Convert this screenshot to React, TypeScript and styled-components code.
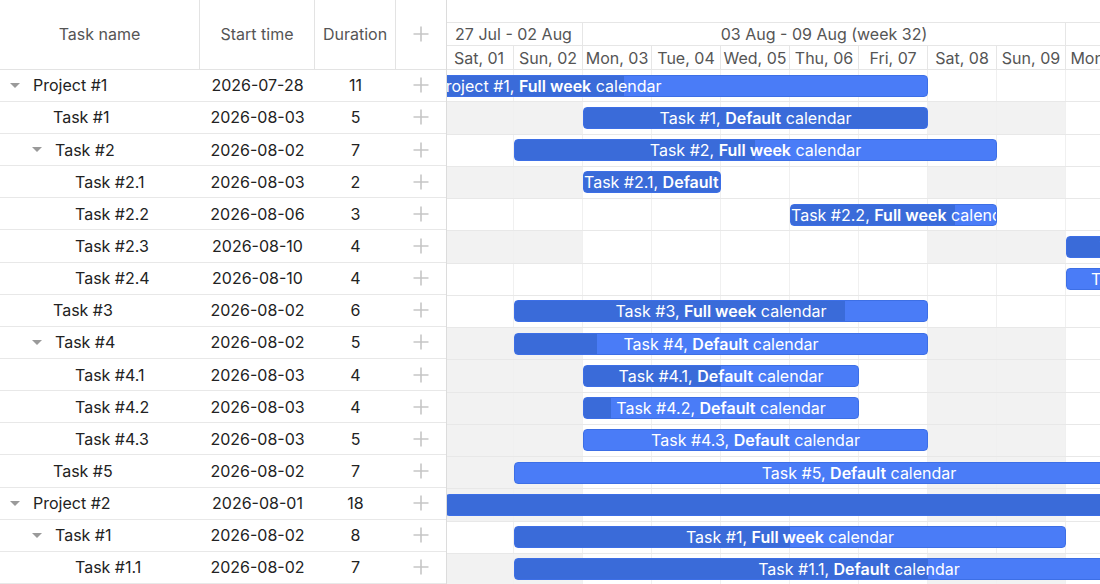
import React from "react";
import styled, { createGlobalStyle } from "styled-components";

const DAY_W = 69;
const ROW_H = 32.27;
const ORIGIN = Date.UTC(2026, 7, 1); // Sat, 01 Aug

type Calendar = "Default" | "Full week";

interface TaskRow {
  name: string;
  level: number;
  parent?: boolean;
  start: string;
  duration: number;
  calendar: Calendar;
  progress: number;
}

const rows: TaskRow[] = [
  { name: "Project #1", level: 0, parent: true, start: "2026-07-28", duration: 11, calendar: "Full week", progress: 0.6 },
  { name: "Task #1", level: 1, start: "2026-08-03", duration: 5, calendar: "Default", progress: 1 },
  { name: "Task #2", level: 1, parent: true, start: "2026-08-02", duration: 7, calendar: "Full week", progress: 0.5 },
  { name: "Task #2.1", level: 2, start: "2026-08-03", duration: 2, calendar: "Default", progress: 1 },
  { name: "Task #2.2", level: 2, start: "2026-08-06", duration: 3, calendar: "Full week", progress: 0.8 },
  { name: "Task #2.3", level: 2, start: "2026-08-10", duration: 4, calendar: "Default", progress: 1 },
  { name: "Task #2.4", level: 2, start: "2026-08-10", duration: 4, calendar: "Full week", progress: 0 },
  { name: "Task #3", level: 1, start: "2026-08-02", duration: 6, calendar: "Full week", progress: 0.8 },
  { name: "Task #4", level: 1, parent: true, start: "2026-08-02", duration: 5, calendar: "Default", progress: 0.2 },
  { name: "Task #4.1", level: 2, start: "2026-08-03", duration: 4, calendar: "Default", progress: 0.5 },
  { name: "Task #4.2", level: 2, start: "2026-08-03", duration: 4, calendar: "Default", progress: 0.1 },
  { name: "Task #4.3", level: 2, start: "2026-08-03", duration: 5, calendar: "Default", progress: 0 },
  { name: "Task #5", level: 1, start: "2026-08-02", duration: 7, calendar: "Default", progress: 0 },
  { name: "Project #2", level: 0, parent: true, start: "2026-08-01", duration: 18, calendar: "Default", progress: 1 },
  { name: "Task #1", level: 1, parent: true, start: "2026-08-02", duration: 8, calendar: "Full week", progress: 0.5 },
  { name: "Task #1.1", level: 2, start: "2026-08-02", duration: 7, calendar: "Default", progress: 0.6 },
];

const days = ["Sat, 01", "Sun, 02", "Mon, 03", "Tue, 04", "Wed, 05", "Thu, 06", "Fri, 07", "Sat, 08", "Sun, 09", "Mon, 10", "Tue, 11"];
// the next week's label sits off to the right, outside the visible area
const weeks = [
  { label: "27 Jul - 02 Aug", span: 2 },
  { label: "03 Aug - 09 Aug (week 32)", span: 7 },
  { label: "", span: 7 },
];

const dayIndex = (iso: string) => {
  const [y, m, d] = iso.split("-").map(Number);
  return Math.round((Date.UTC(y, m - 1, d) - ORIGIN) / 86400000);
};
const isWeekend = (i: number) => {
  const dow = ((i % 7) + 7) % 7; // 0 = Sat, 1 = Sun
  return dow === 0 || dow === 1;
};
const endIndex = (t: TaskRow) => {
  const s = dayIndex(t.start);
  if (t.calendar === "Full week") return s + t.duration;
  let i = s;
  let count = 0;
  while (count < t.duration) {
    if (!isWeekend(i)) count++;
    i++;
  }
  return i;
};

const GlobalStyle = createGlobalStyle`
  html, body {
    margin: 0;
    padding: 0;
    background: #fff;
  }
  body {
    font-family: Inter, "Noto Sans", "Liberation Sans", sans-serif;
    color: #222;
  }
`;

const Page = styled.div`
  display: flex;
  width: 1100px;
  height: 584px;
  overflow: hidden;
  background: #fff;
`;

/* ---------- left grid ---------- */
const Grid = styled.div`
  width: 446px;
  flex: none;
  border-right: 1px solid #dcdcdc;
  display: flex;
  flex-direction: column;
`;
const GridHeader = styled.div`
  display: grid;
  grid-template-columns: 200px 115px 81px 50px;
  height: 70px;
  box-sizing: border-box;
  border-bottom: 1px solid #e3e3e3;
`;
const HeaderCell = styled.div<{ $last?: boolean }>`
  display: flex;
  align-items: center;
  justify-content: center;
  font-size: 16px;
  color: #555;
  border-right: ${(p) => (p.$last ? "none" : "1px solid #e3e3e3")};
`;
const GridRow = styled.div`
  display: grid;
  grid-template-columns: 200px 115px 81px 50px;
  height: ${ROW_H}px;
  box-sizing: border-box;
  border-bottom: 1px solid #e8e8e8;
  font-size: 16px;
  color: #222;
`;
const NameCell = styled.div<{ $level: number }>`
  display: flex;
  align-items: center;
  padding-left: ${(p) => 6 + p.$level * 22}px;
  white-space: nowrap;
`;
const Toggle = styled.span`
  width: 18px;
  margin-right: 9px;
  display: flex;
  justify-content: center;
  &::before {
    content: "";
    border-left: 5px solid transparent;
    border-right: 5px solid transparent;
    border-top: 5px solid #9a9a9a;
  }
`;
const LeafSpacer = styled.span`
  width: 25px;
  flex: none;
`;
const CenterCell = styled.div`
  display: flex;
  align-items: center;
  justify-content: center;
`;

const Plus = () => (
  <svg width="16" height="16" viewBox="0 0 16 16">
    <path d="M8 0.5v15M0.5 8h15" stroke="#c6c6c6" strokeWidth="1.6" fill="none" />
  </svg>
);

/* ---------- timeline ---------- */
const Timeline = styled.div`
  flex: 1;
  overflow: hidden;
`;
const TimelineInner = styled.div`
  margin-left: -2px;
  width: ${DAY_W * 16}px;
`;
const ScaleBlank = styled.div`
  height: 23px;
  box-sizing: border-box;
  border-bottom: 1px solid #e6e6e6;
`;
const ScaleRow = styled.div<{ $h: number }>`
  display: flex;
  height: ${(p) => p.$h}px;
  box-sizing: border-box;
  border-bottom: 1px solid #e6e6e6;
`;
const ScaleCell = styled.div<{ $span: number }>`
  width: ${(p) => p.$span * DAY_W}px;
  flex: none;
  box-sizing: border-box;
  border-right: 1px solid #e6e6e6;
  font-size: 16px;
  color: #555;
  text-align: center;
  white-space: nowrap;
  overflow: hidden;
  display: flex;
  align-items: center;
  justify-content: center;
`;
const BarRow = styled.div`
  position: relative;
  display: flex;
  height: ${ROW_H}px;
  box-sizing: border-box;
  border-bottom: 1px solid #e8e8e8;
`;
const DayCell = styled.div<{ $off: boolean }>`
  width: ${DAY_W}px;
  flex: none;
  box-sizing: border-box;
  border-right: 1px solid #f0f0f0;
  background: ${(p) => (p.$off ? "#f2f2f2" : "#fff")};
`;
const Bar = styled.div<{ $progress: number }>`
  position: absolute;
  top: 4.5px;
  height: 22px;
  box-sizing: border-box;
  border: 1px solid #3d6fe6;
  border-radius: 4px;
  background: linear-gradient(
    to right,
    #3a6bd9 ${(p) => p.$progress * 100}%,
    #4a7cf7 ${(p) => p.$progress * 100}%
  );
  color: #fff;
  font-size: 16px;
  line-height: 20px;
  text-align: center;
  white-space: nowrap;
  overflow: hidden;
  b {
    font-weight: 600;
  }
`;

const App: React.FC = () => {
  return (
    <>
      <GlobalStyle />
      <Page>
        <Grid>
          <GridHeader>
            <HeaderCell>Task name</HeaderCell>
            <HeaderCell>Start time</HeaderCell>
            <HeaderCell>Duration</HeaderCell>
            <HeaderCell $last>
              <Plus />
            </HeaderCell>
          </GridHeader>
          {rows.map((r, i) => (
            <GridRow key={i}>
              <NameCell $level={r.level}>
                {r.parent ? <Toggle /> : <LeafSpacer />}
                {r.name}
              </NameCell>
              <CenterCell>{r.start}</CenterCell>
              <CenterCell>{r.duration}</CenterCell>
              <CenterCell>
                <Plus />
              </CenterCell>
            </GridRow>
          ))}
        </Grid>
        <Timeline>
          <TimelineInner>
            <ScaleBlank />
            <ScaleRow $h={23}>
              {weeks.map((w, i) => (
                <ScaleCell key={i} $span={w.span}>
                  {w.label}
                </ScaleCell>
              ))}
            </ScaleRow>
            <ScaleRow $h={24}>
              {days.map((d) => (
                <ScaleCell key={d} $span={1}>
                  {d}
                </ScaleCell>
              ))}
            </ScaleRow>
            {rows.map((r, i) => {
              const s = dayIndex(r.start);
              const e = endIndex(r);
              return (
                <BarRow key={i}>
                  {days.map((d, di) => (
                    <DayCell key={d} $off={r.calendar === "Default" && isWeekend(di)} />
                  ))}
                  <Bar $progress={r.progress} style={{ left: s * DAY_W, width: (e - s) * DAY_W }}>
                    {r.name}, <b>{r.calendar}</b> calendar
                  </Bar>
                </BarRow>
              );
            })}
          </TimelineInner>
        </Timeline>
      </Page>
    </>
  );
};

export default App;
